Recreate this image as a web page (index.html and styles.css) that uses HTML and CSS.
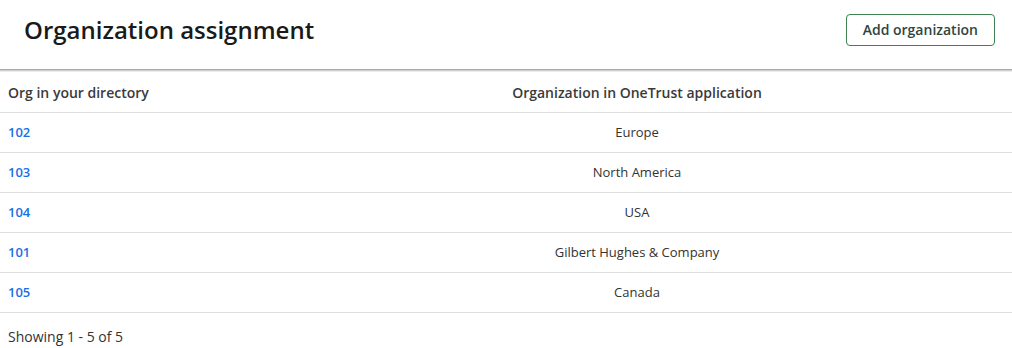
FILE: index.html
```html
<!doctype html>

<html lang="en">
<head>
  <meta charset="utf-8">
  <title>Organization assignment</title>
  <meta name="viewport" content="width=device-width, initial-scale=1" />
  <link rel="stylesheet" href="styles.css">
</head>

<body>
  <div class="header">
    <h1>Organization assignment</h1>
    <button class="add">Add organization</button>
  </div>

  <table class="orgs">
    <thead>
      <tr>
        <th class="dir">Org in your directory</th>
        <th class="app">Organization in OneTrust application</th>
      </tr>
    </thead>
    <tbody>
      <tr><td class="dir"><a href="#">102</a></td><td class="app">Europe</td></tr>
      <tr><td class="dir"><a href="#">103</a></td><td class="app">North America</td></tr>
      <tr><td class="dir"><a href="#">104</a></td><td class="app">USA</td></tr>
      <tr><td class="dir"><a href="#">101</a></td><td class="app">Gilbert Hughes &amp; Company</td></tr>
      <tr><td class="dir"><a href="#">105</a></td><td class="app">Canada</td></tr>
    </tbody>
  </table>

  <p class="count">Showing 1 - 5 of 5</p>
</body>
</html>
```

FILE: styles.css
```css
body {
  margin: 0;
  font-family: "Open Sans", "Noto Sans", sans-serif;
  color: #333;
  background: white;
}

.header {
  display: flex;
  align-items: center;
  justify-content: space-between;
  height: 70px;
  padding: 0 17px 0 24px;
  box-sizing: border-box;
  border-bottom: solid 1px #a8a8a8;
  box-shadow: 0 1px 0 #d0d0d0, 0 2px 0 #ececec;
}

h1 {
  margin: 0;
  font-size: 24px;
  font-weight: 600;
  color: #1a1a1a;
  padding-bottom: 10px;
}

.add {
  font-family: inherit;
  font-size: 14px;
  font-weight: 600;
  color: #2f4540;
  background: white;
  border: solid 1px #3f8150;
  border-radius: 4px;
  height: 32px;
  padding: 0 16px;
  margin-bottom: 10px;
}

.orgs {
  width: 100%;
  border-collapse: collapse;
  margin-top: 3px;
}

.orgs th,
.orgs td {
  height: 39px;
  padding: 0 8px;
  border-bottom: solid 1px #dedede;
  font-size: 13px;
}

.orgs td {
  height: 37px;
  padding-bottom: 2px;
}

.orgs th {
  font-weight: 600;
  color: #3a3a3a;
  font-size: 14px;
}

.orgs .dir {
  width: 246px;
  text-align: left;
}

.orgs .app {
  text-align: center;
}

.orgs a {
  color: #1a6fe6;
  font-weight: 600;
  text-decoration: none;
}

.count {
  margin: 14px 8px 0;
  font-size: 14px;
}
```
